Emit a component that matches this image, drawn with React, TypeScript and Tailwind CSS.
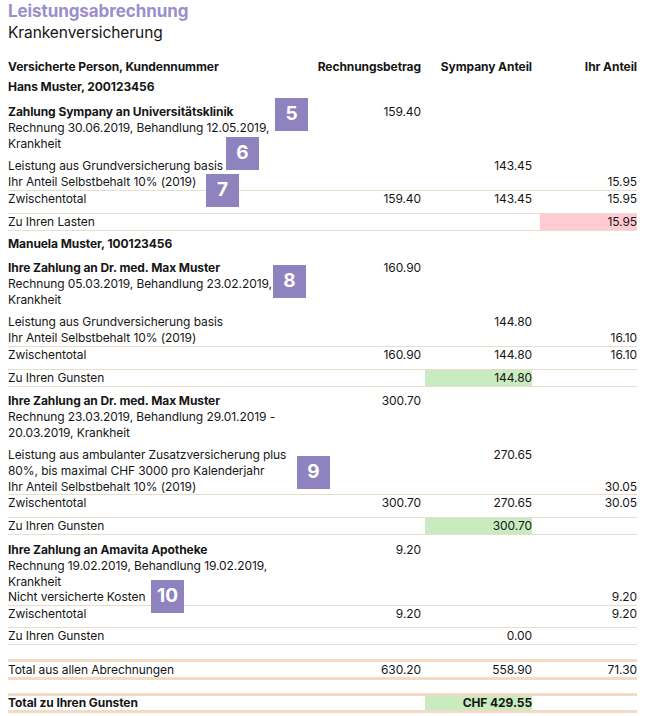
import React from "react"

type RowProps = {
  label?: React.ReactNode
  a?: string
  b?: string
  c?: string
  bold?: boolean
  h?: string
  className?: string
  greenB?: boolean
  pinkC?: boolean
}

// one table row: label + three right-aligned amount columns
function Row({ label, a, b, c, bold, h = "h-[16px] leading-[16px]", className = "", greenB, pinkC }: RowProps) {
  return (
    <div className={`grid grid-cols-[minmax(0,1fr)_117px_107px_105px] ${h} ${bold ? "font-bold" : ""} ${className}`}>
      <div className="whitespace-nowrap min-w-0">{label}</div>
      <div className="text-right pr-1">{a}</div>
      <div className={`text-right ${greenB ? "bg-[#c8ecbf]" : ""}`}>{b}</div>
      <div className="pl-2">
        <div className={`text-right h-full ${pinkC ? "bg-[#fdcbd1]" : ""}`}>{c}</div>
      </div>
    </div>
  )
}

function Line({ thick }: { thick?: boolean }) {
  return thick ? <div className="h-[3px] bg-[#f3dac4]" /> : <div className="h-px bg-[#e8dccb]" />
}

function Badge({ n, className }: { n: string; className: string }) {
  return (
    <div className={`absolute w-[33px] h-[33px] bg-[#8e83be] text-white font-bold text-[19px] tracking-normal flex items-center justify-center ${className}`}>
      {n}
    </div>
  )
}

const T = "h-[15.5px] leading-[15.5px]"

export default function App() {
  return (
    <div className="relative w-[650px] h-[716px] bg-white pl-2 pr-[13px] text-[12px] tracking-[-0.08px] text-[#161616] font-['Inter','Liberation_Sans',sans-serif]">
      <div className="text-[17px] leading-[22px] font-bold text-[#9b8ecb]">Leistungsabrechnung</div>
      <div className="text-[15.5px] leading-[22px]">Krankenversicherung</div>

      <Row className="mt-[15px]" bold label="Versicherte Person, Kundennummer" a="Rechnungsbetrag" b="Sympany Anteil" c="Ihr Anteil" />
      <Row className="mt-1" bold label="Hans Muster, 200123456" />

      {/* Hans Muster */}
      <Row className="mt-[9px]" label={<span className="font-bold">Zahlung Sympany an Universitätsklinik</span>} a="159.40" />
      <Row h={T} label="Rechnung 30.06.2019, Behandlung 12.05.2019," />
      <Row h={T} label="Krankheit" />
      <Row className="mt-[7px]" label="Leistung aus Grundversicherung basis" b="143.45" />
      <Row label="Ihr Anteil Selbstbehalt 10% (2019)" c="15.95" />
      <Line />
      <Row label="Zwischentotal" a="159.40" b="143.45" c="15.95" />
      <div className="h-[6px]" />
      <Line />
      <Row label="Zu Ihren Lasten" c="15.95" pinkC />
      <Line />

      {/* Manuela Muster */}
      <Row className="mt-[5px]" bold label="Manuela Muster, 100123456" />
      <Row className="mt-[8px]" label={<span className="font-bold">Ihre Zahlung an Dr. med. Max Muster</span>} a="160.90" />
      <Row h={T} label="Rechnung 05.03.2019, Behandlung 23.02.2019," />
      <Row h={T} label="Krankheit" />
      <Row className="mt-[7px]" label="Leistung aus Grundversicherung basis" b="144.80" />
      <Row label="Ihr Anteil Selbstbehalt 10% (2019)" c="16.10" />
      <Line />
      <Row label="Zwischentotal" a="160.90" b="144.80" c="16.10" />
      <div className="h-[6px]" />
      <Line />
      <Row label="Zu Ihren Gunsten" b="144.80" greenB />
      <Line />

      <Row className="mt-[6px]" label={<span className="font-bold">Ihre Zahlung an Dr. med. Max Muster</span>} a="300.70" />
      <Row h={T} label="Rechnung 23.03.2019, Behandlung 29.01.2019 -" />
      <Row h={T} label="20.03.2019, Krankheit" />
      <Row className="mt-[7px]" label="Leistung aus ambulanter Zusatzversicherung plus" b="270.65" />
      <Row h={T} label="80%, bis maximal CHF 3000 pro Kalenderjahr" />
      <Row h={T} label="Ihr Anteil Selbstbehalt 10% (2019)" c="30.05" />
      <Line />
      <Row label="Zwischentotal" a="300.70" b="270.65" c="30.05" />
      <div className="h-[6px]" />
      <Line />
      <Row label="Zu Ihren Gunsten" b="300.70" greenB />
      <Line />

      <Row className="mt-[7px]" label={<span className="font-bold">Ihre Zahlung an Amavita Apotheke</span>} a="9.20" />
      <Row h={T} label="Rechnung 19.02.2019, Behandlung 19.02.2019," />
      <Row h={T} label="Krankheit" />
      <Row h={T} label="Nicht versicherte Kosten" c="9.20" />
      <Line />
      <Row label="Zwischentotal" a="9.20" c="9.20" />
      <div className="h-[5.5px]" />
      <Line />
      <Row label="Zu Ihren Gunsten" b="0.00" />
      <Line />

      {/* totals */}
      <div className="h-[14px]" />
      <Line thick />
      <Row h="h-[15px] leading-[15px]" label="Total aus allen Abrechnungen" a="630.20" b="558.90" c="71.30" />
      <Line thick />
      <div className="h-[13px]" />
      <Line thick />
      <Row h="h-[14px] leading-[14px]" bold label="Total zu Ihren Gunsten" b="CHF 429.55" greenB />
      <Line thick />

      <Badge n="5" className="left-[275px] top-[98px]" />
      <Badge n="6" className="left-[226px] top-[137px]" />
      <Badge n="7" className="left-[206px] top-[174px]" />
      <Badge n="8" className="left-[273px] top-[265px]" />
      <Badge n="9" className="left-[297px] top-[456px]" />
      <Badge n="10" className="left-[151px] top-[580px]" />
    </div>
  )
}
